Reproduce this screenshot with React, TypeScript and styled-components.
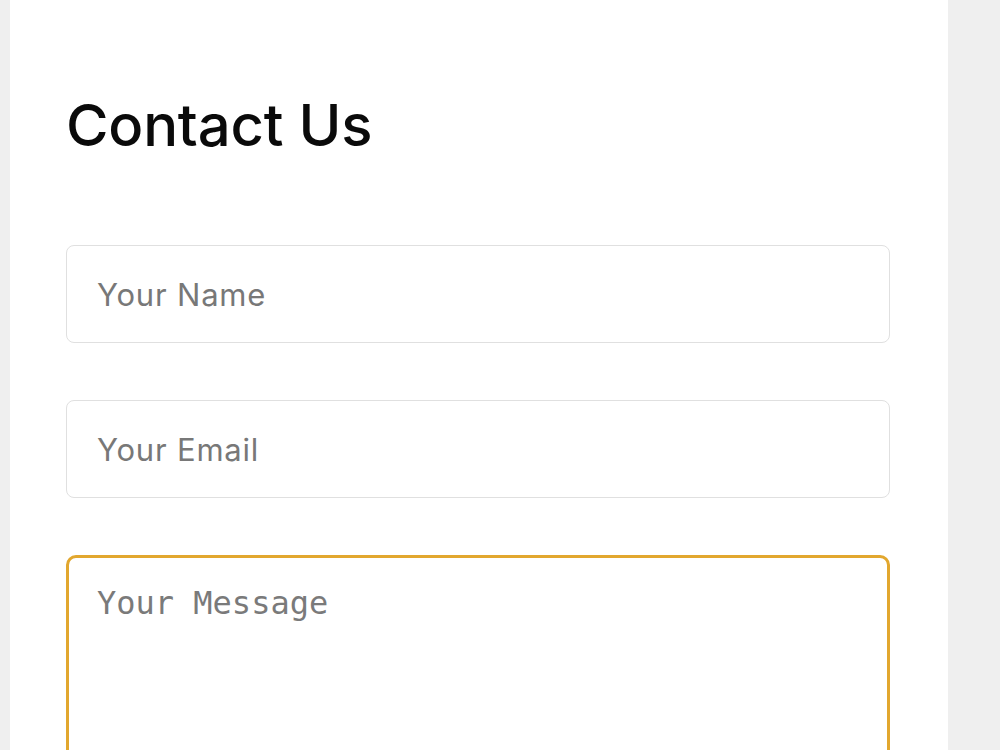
import React from "react";
import styled, { createGlobalStyle } from "styled-components";

const GlobalStyle = createGlobalStyle`
  html, body {
    margin: 0;
    padding: 0;
    background: #efefef;
    overflow: hidden;
  }
  * {
    box-sizing: border-box;
  }
`;

const Page = styled.div`
  display: flex;
  padding-left: 10px;
  min-height: 750px;
`;

const Card = styled.section`
  width: 938px;
  min-height: 900px;
  background: #ffffff;
  padding: 89px 58px 40px 56px;
  font-family: Inter, "Noto Sans", sans-serif;
`;

const Title = styled.h1`
  margin: 0 0 84px;
  font-size: 58px;
  font-weight: 500;
  line-height: 72px;
  color: #0a0a0a;
  letter-spacing: -0.2px;
`;

const Form = styled.form`
  display: flex;
  flex-direction: column;
  gap: 57px;
`;

const Field = styled.input`
  height: 98px;
  width: 100%;
  padding: 0 30px;
  border: 1.5px solid #e0e0e0;
  border-radius: 8px;
  font-family: Inter, "Noto Sans", sans-serif;
  font-size: 31px;
  letter-spacing: 0.8px;
  color: #222;
  background: #fff;
  outline: none;

  &::placeholder {
    color: #787878;
  }
`;

const Message = styled.textarea`
  height: 260px;
  width: 100%;
  padding: 25px 28px;
  border: 3px solid #e2a72e;
  border-radius: 10px;
  font-family: "DejaVu Sans Mono", monospace;
  font-size: 32px;
  line-height: 40px;
  color: #222;
  background: #fff;
  outline: none;
  resize: none;
  caret-color: #111;

  &::placeholder {
    color: #7a7a7a;
  }
`;

export default function App() {
  return (
    <Page>
      <GlobalStyle />
      <Card>
        <Title>Contact Us</Title>
        <Form onSubmit={(e) => e.preventDefault()}>
          <Field type="text" placeholder="Your Name" />
          <Field type="email" placeholder="Your Email" />
          <Message placeholder="Your Message" autoFocus />
        </Form>
      </Card>
    </Page>
  );
}
